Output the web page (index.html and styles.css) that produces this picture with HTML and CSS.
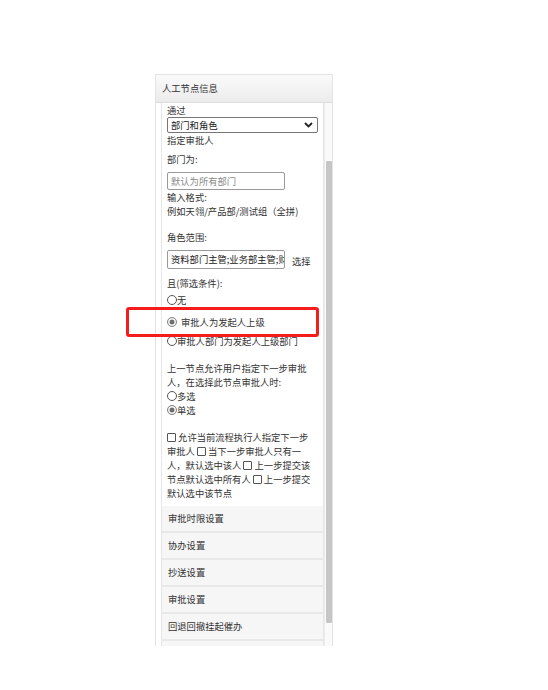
FILE: index.html
```html
<!DOCTYPE html>
<html>
<head>
    <title>人工节点信息</title>
    <meta charset="UTF-8">
    <link rel="stylesheet" href="styles.css">
</head>
<body>
    <div class="panel">
        <div class="panel-head">人工节点信息</div>
        <div class="panel-body">
            <div class="scroll-area">
                <div class="form-box">
                    <div class="line">通过</div>
                    <div class="select">
                        <span>部门和角色</span>
                        <svg class="chevron" width="9" height="6" viewBox="0 0 9 6"><path d="M1 1 L4.5 4.5 L8 1" fill="none" stroke="#222" stroke-width="1.8"/></svg>
                    </div>
                    <div class="line">指定审批人</div>

                    <div class="line label">部门为:</div>
                    <div class="text-input placeholder">默认为所有部门</div>
                    <div class="line">输入格式:</div>
                    <div class="line">例如天翎/产品部/测试组（全拼)</div>

                    <div class="line label-lg">角色范围:</div>
                    <div class="input-row">
                        <div class="text-input">资料部门主管;业务部主管;财务部主管</div>
                        <span class="pick">选择</span>
                    </div>

                    <div class="line filter">且(筛选条件):</div>
                    <div class="line opt opt-first"><span class="radio"></span>无</div>
                    <div class="line opt opt-sel"><span class="radio on"></span><span class="gap"></span>审批人为发起人上级</div>
                    <div class="line opt"><span class="radio"></span>审批人部门为发起人上级部门</div>

                    <div class="line note">上一节点允许用户指定下一步审批</div>
                    <div class="line">人，在选择此节点审批人时:</div>
                    <div class="line opt"><span class="radio"></span>多选</div>
                    <div class="line opt"><span class="radio on"></span>单选</div>

                    <p class="checks">
                        <span class="check"></span> 允许当前流程执行人指定下一步<br>
                        审批人 <span class="check"></span> 当下一步审批人只有一<br>
                        人，默认选中该人 <span class="check"></span> 上一步提交该<br>
                        节点默认选中所有人 <span class="check"></span> 上一步提交<br>
                        默认选中该节点
                    </p>
                </div>

                <div class="acc-item">审批时限设置</div>
                <div class="acc-item">协办设置</div>
                <div class="acc-item">抄送设置</div>
                <div class="acc-item">审批设置</div>
                <div class="acc-item">回退回撤挂起催办</div>
                <div class="acc-item">流程事件设置</div>
            </div>
            <div class="scrollbar"><div class="thumb"></div></div>
        </div>
    </div>

    <div class="mark"></div>
</body>
</html>
```

FILE: styles.css
```css
body {
    margin: 0;
    background: #fff;
    color: #333;
    font-family: "Noto Sans CJK SC", "Noto Sans", sans-serif;
    font-size: 9.3px;
}

.panel {
    box-sizing: border-box;
    width: 178px;
    margin: 74px 0 0 155px;
    border: 1px solid #e3e3e3;
    border-bottom: none;
}

.panel-head {
    height: 27px;
    line-height: 27px;
    padding-left: 6px;
    background: linear-gradient(#fafafa, #ececec);
    border-bottom: 1px solid #dcdcdc;
    color: #333;
}

.panel-body {
    display: flex;
    height: 543px;
    overflow: hidden;
}

.scroll-area {
    width: 163px;
    padding-left: 5px;
    border-right: 1px solid #ececec;
}

.form-box {
    border-left: 1px solid #e6e6e6;
    border-right: 1px solid #e6e6e6;
    padding: 0 0 6px 5px;
}

.line {
    height: 14px;
    line-height: 14px;
    white-space: nowrap;
}

.select {
    box-sizing: border-box;
    display: flex;
    align-items: center;
    justify-content: space-between;
    width: 151px;
    height: 16px;
    padding: 0 4px 0 3px;
    border: 1px solid #767676;
    border-radius: 2px;
    color: #222;
}

.text-input {
    box-sizing: border-box;
    width: 118px;
    height: 18px;
    line-height: 16px;
    padding: 0 3px;
    margin-top: 6px;
    border: 1px solid #999;
    border-radius: 2px;
    overflow: hidden;
    white-space: nowrap;
    text-overflow: clip;
    color: #222;
}

.placeholder {
    color: #8a8a8a;
}

.label {
    margin-top: 5px;
}

.label-lg {
    margin-top: 12px;
}

.input-row {
    display: flex;
    align-items: flex-end;
    gap: 7px;
}

.input-row .text-input {
    height: 19px;
    line-height: 17px;
}

.pick {
    line-height: 16px;
}

.filter {
    margin-top: 7px;
}

.opt {
    display: flex;
    align-items: center;
}

.opt-first {
    margin-top: 3px;
}

.opt-sel {
    margin-top: 8px;
    margin-bottom: 5px;
}

.gap {
    width: 4px;
}

.radio {
    box-sizing: border-box;
    width: 10px;
    height: 10px;
    border: 1px solid #555;
    border-radius: 50%;
    background: #fff;
}

.radio.on {
    border-color: #8a8a8a;
    box-shadow: inset 0 0 0 1.5px #fff;
    background: #6e6e6e;
}

.note {
    margin-top: 13px;
}

.checks {
    margin: 13px 0 0 0;
    line-height: 14px;
    white-space: nowrap;
}

.check {
    display: inline-block;
    box-sizing: border-box;
    width: 9px;
    height: 9px;
    border: 1px solid #555;
    border-radius: 1px;
    vertical-align: -1px;
}

.acc-item {
    height: 25px;
    line-height: 25px;
    padding-left: 6px;
    background: #f6f6f6;
    border-left: 1px solid #e6e6e6;
    border-right: 1px solid #e6e6e6;
    border-bottom: 2px solid #e8e8e8;
    color: #333;
}

.scrollbar {
    flex: 1;
    background: #fafafa;
}

.thumb {
    width: 6px;
    height: 462px;
    margin: 58px 0 0 1px;
    background: #c6c6c6;
    border-radius: 1px;
}

.mark {
    position: absolute;
    left: 126px;
    top: 307px;
    width: 187px;
    height: 24px;
    border: 3px solid #f51c1c;
    border-radius: 3px;
}
```
